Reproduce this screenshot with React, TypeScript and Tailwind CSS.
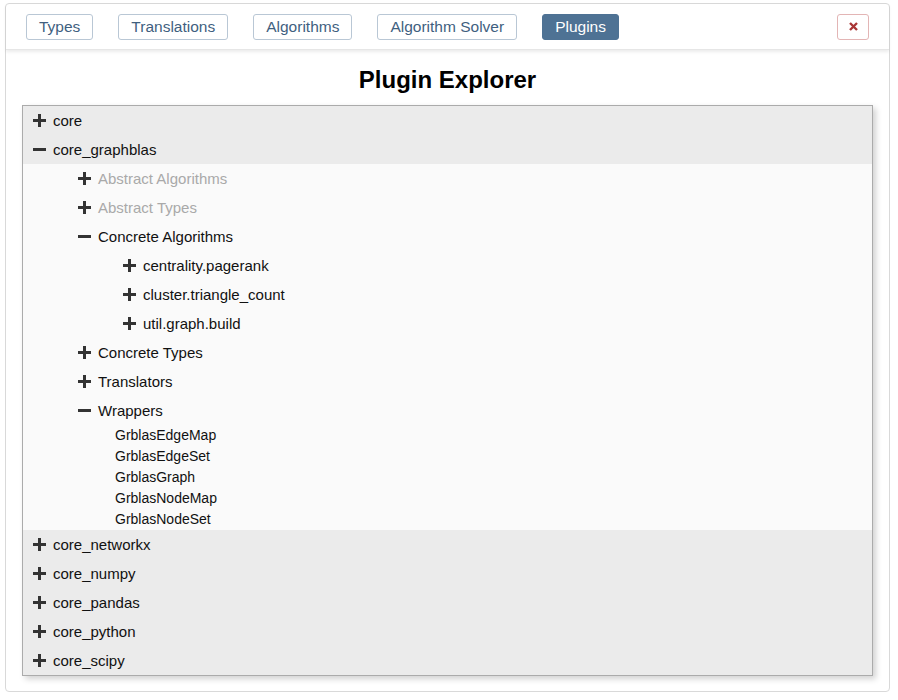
import React from "react";

const Plus = () => (
  <svg width="13" height="13" viewBox="0 0 13 13" className="shrink-0">
    <rect x="0" y="5" width="13" height="3" fill="#333" />
    <rect x="5" y="0" width="3" height="13" fill="#333" />
  </svg>
);
const Minus = () => (
  <svg width="13" height="13" viewBox="0 0 13 13" className="shrink-0">
    <rect x="0" y="5" width="13" height="3" fill="#333" />
  </svg>
);

function Row({
  pl,
  open,
  label,
  muted,
}: {
  pl: string;
  open?: boolean;
  label: string;
  muted?: boolean;
}) {
  return (
    <div className={`flex h-[29px] items-center gap-[7px] ${pl}`}>
      {open ? <Minus /> : <Plus />}
      <span className={`text-[15px] leading-none ${muted ? "text-[#a9a9a9]" : "text-[#111]"}`}>{label}</span>
    </div>
  );
}

const tabs = ["Types", "Translations", "Algorithms", "Algorithm Solver"];

export default function App() {
  return (
    <div className="h-[700px] w-[898px] bg-white pl-[5px] pr-[8px] pt-[3px]" style={{ fontFamily: '"Liberation Sans", Arial, Helvetica, sans-serif' }}>
      <div className="flex h-[689px] flex-col rounded-[4px] border border-[#d9d9d9]">
        <div className="flex h-[46px] shrink-0 items-center gap-[25px] px-[20px] shadow-[0_2px_3px_rgba(0,0,0,0.08)] border-b border-[#e6e6e6]">
          {tabs.map((t) => (
            <button
              key={t}
              className="h-[26px] rounded-[3px] border border-[#b9c7d5] bg-white px-[12px] text-[15.5px] leading-none text-[#3f5f7f]"
            >
              {t}
            </button>
          ))}
          <button className="h-[26px] rounded-[3px] border border-[#4e7294] bg-[#4e7294] px-[12px] text-[15.5px] leading-none text-white">
            Plugins
          </button>
          <div className="flex-1" />
          <button className="flex h-[26px] w-[32px] items-center justify-center rounded-[3px] border border-[#e3b5b5] bg-white">
            <svg width="9" height="9" viewBox="0 0 9 9">
              <path d="M1 1 L8 8 M8 1 L1 8" stroke="#a93636" strokeWidth="2.4" strokeLinecap="butt" />
            </svg>
          </button>
        </div>
        <div className="px-4 pb-4">
          <h1 className="mt-[14px] mb-[9px] h-[32px] text-center text-[24px] font-bold leading-[32px] text-black">
            Plugin Explorer
          </h1>
          <div className="border border-[#ababab] bg-[#ebebeb] shadow-[3px_3px_6px_rgba(0,0,0,0.18)]">
            <Row pl="pl-[10px]" label="core" />
            <Row pl="pl-[10px]" open label="core_graphblas" />
            <div className="bg-[#fafafa]">
              <Row pl="pl-[55px]" muted label="Abstract Algorithms" />
              <Row pl="pl-[55px]" muted label="Abstract Types" />
              <Row pl="pl-[55px]" open label="Concrete Algorithms" />
              <Row pl="pl-[100px]" label="centrality.pagerank" />
              <Row pl="pl-[100px]" label="cluster.triangle_count" />
              <Row pl="pl-[100px]" label="util.graph.build" />
              <Row pl="pl-[55px]" label="Concrete Types" />
              <Row pl="pl-[55px]" label="Translators" />
              <Row pl="pl-[55px]" open label="Wrappers" />
              <div>
                {["GrblasEdgeMap", "GrblasEdgeSet", "GrblasGraph", "GrblasNodeMap", "GrblasNodeSet"].map((w) => (
                  <div key={w} className="flex h-[21px] items-center pb-[1px] pl-[92px] text-[14px] leading-none text-[#111]">
                    {w}
                  </div>
                ))}
              </div>
            </div>
            <Row pl="pl-[10px]" label="core_networkx" />
            <Row pl="pl-[10px]" label="core_numpy" />
            <Row pl="pl-[10px]" label="core_pandas" />
            <Row pl="pl-[10px]" label="core_python" />
            <Row pl="pl-[10px]" label="core_scipy" />
          </div>
        </div>
      </div>
    </div>
  );
}
